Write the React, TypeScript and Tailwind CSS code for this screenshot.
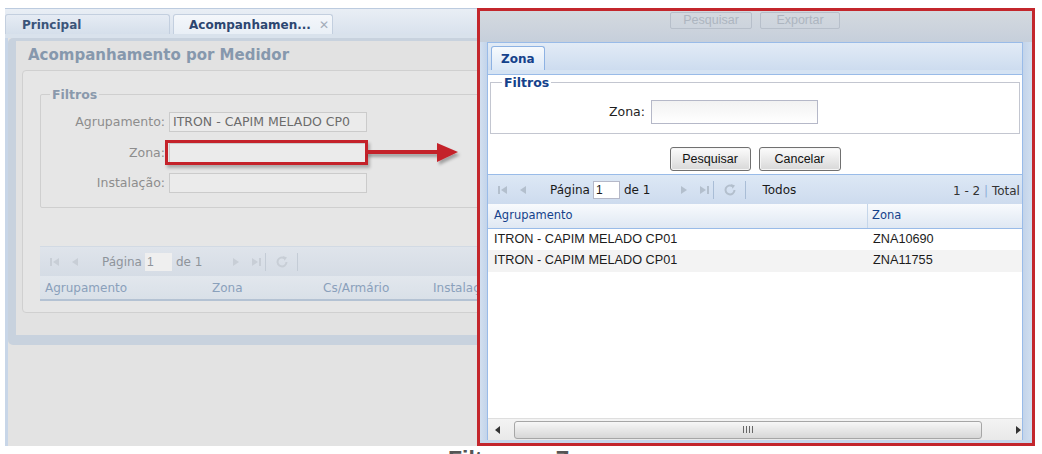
import React from "react";

const DJ = "font-['DejaVu_Sans',sans-serif]";
const LS = "font-['Liberation_Sans',Arial,sans-serif]";

function First({ c }: { c: string }) {
  return (
    <svg width="12" height="12" viewBox="0 0 12 12">
      <rect x="1" y="2" width="2" height="8" fill={c} />
      <path d="M10 2 L4 6 L10 10 Z" fill={c} />
    </svg>
  );
}
function Prev({ c }: { c: string }) {
  return (
    <svg width="12" height="12" viewBox="0 0 12 12">
      <path d="M9 2 L3 6 L9 10 Z" fill={c} />
    </svg>
  );
}
function Next({ c }: { c: string }) {
  return (
    <svg width="12" height="12" viewBox="0 0 12 12">
      <path d="M3 2 L9 6 L3 10 Z" fill={c} />
    </svg>
  );
}
function Last({ c }: { c: string }) {
  return (
    <svg width="12" height="12" viewBox="0 0 12 12">
      <path d="M2 2 L8 6 L2 10 Z" fill={c} />
      <rect x="9" y="2" width="2" height="8" fill={c} />
    </svg>
  );
}
function Refresh({ c }: { c: string }) {
  return (
    <svg width="14" height="14" viewBox="0 0 14 14">
      <path d="M11.5 7 A4.5 4.5 0 1 1 9.5 3.2" fill="none" stroke={c} strokeWidth="2" />
      <path d="M8 1 L12 2.5 L9.5 5.8 Z" fill={c} />
    </svg>
  );
}

function Paging({ dim }: { dim: boolean }) {
  const ic = dim ? "#c8ced6" : "#b3bfcd";
  const tx = dim ? "text-[#8e949b]" : "text-[#1a1a1a]";
  const sep = dim ? "bg-[#c4ccd6]" : "bg-[#a9bdd6]";
  return (
    <div className={`flex items-center h-full ${DJ} text-[12px] ${tx}`}>
      <div className="ml-[9px] flex"><First c={ic} /></div>
      <div className="ml-[8px] flex"><Prev c={ic} /></div>
      <span className="ml-[21px]">Página</span>
      <div className={`ml-[3px] w-[27px] h-[18px] flex items-center pl-[2px] ${dim ? "bg-[#efefef]" : "bg-white border border-[#b5b8c8]"}`}>
        <span className={LS}>1</span>
      </div>
      <span className="ml-[4px]">de 1</span>
      <div className="ml-[28px] flex"><Next c={ic} /></div>
      <div className="ml-[8px] flex"><Last c={ic} /></div>
      <div className={`ml-[3px] w-px h-[18px] ${sep}`} />
      <div className="ml-[9px] flex"><Refresh c={ic} /></div>
      <div className={`ml-[8px] w-px h-[18px] ${sep}`} />
      {!dim && <span className="ml-[16px]">Todos</span>}
    </div>
  );
}

export default function App() {
  return (
    <div className="w-[1042px] h-[454px] bg-white overflow-hidden">
      <div className="flex pt-[8px] pl-[5px] h-[446px]">
        {/* LEFT (masked app) */}
        <div className="w-[472px] h-[438px] flex flex-col overflow-hidden bg-[#e3e3e3]">
          {/* tab strip */}
          <div className="h-[26px] border-t border-[#bccbdf] bg-gradient-to-b from-[#e9eef5] to-[#d9e2ed] flex items-end shrink-0">
            <div className={`w-[165px] h-[20px] rounded-t-[3px] border border-b-0 border-[#c3cfdf] bg-gradient-to-b from-[#e6ecf4] to-[#d5dfeb] flex items-center pl-[16px] ${DJ} font-bold text-[12px] text-[#3a5479]`}>
              Principal
            </div>
            <div className={`ml-[3px] w-[160px] h-[20px] rounded-t-[3px] border border-b-0 border-[#c3cfdf] bg-gradient-to-b from-[#f4f7fb] to-[#e9eff6] flex items-center pl-[15px] ${DJ} font-bold text-[12px] text-[#2c4670]`}>
              <span>Acompanhamen...</span>
              <span className="ml-[8px] text-[#a3adb9] font-normal text-[12px]">✕</span>
            </div>
          </div>
          {/* body */}
          <div className="flex-1 flex border-t-[4px] border-[#d9e2ec]">
            <div className="w-[3px] bg-[#c8d6e8] shrink-0" />
            <div className="flex-1 flex flex-col">
              {/* window */}
              <div className="relative w-[490px] h-[307px] border-l-[8px] border-t-[3px] border-b-[10px] border-[#c8d2de] rounded-[5px] bg-[#e2e2e2] flex flex-col">
                <div className={`h-[29px] flex items-center pl-[12px] ${DJ} font-bold text-[15px] text-[#8698ad]`}>
                  Acompanhamento por Medidor
                </div>
                <div className="ml-[6px] h-[243px] border border-[#d0d0d0] rounded-[4px] bg-[#e6e6e6] flex flex-col pl-[17px]">
                  <fieldset className="mt-[16px] h-[121px] border border-[#cfcfcf] rounded-[2px] px-0 pb-0 mr-[-20px]">
                    <legend className={`ml-[9px] px-[2px] ${DJ} font-bold text-[12.5px] text-[#8a99ac] leading-[15px]`}>Filtros</legend>
                    <div className={`flex flex-col ${DJ} text-[12.5px] text-[#8d8d8d]`}>
                      <div className="flex items-center mt-[10px]">
                        <span className="w-[124px] text-right">Agrupamento:</span>
                        <div className="ml-[4px] w-[198px] h-[20px] border border-[#cbcbcb] bg-[#ebebeb] flex items-center pl-[3px] text-[#6c6c6c] whitespace-nowrap overflow-hidden">
                          ITRON - CAPIM MELADO CP0
                        </div>
                      </div>
                      <div className="flex items-center mt-[11px]">
                        <span className="w-[124px] text-right">Zona:</span>
                        <div className="relative ml-[4px] w-[198px] h-[20px] border border-[#cbcbcb] bg-[#ebebeb]">
                          <div className="absolute left-[-5px] top-[-4px] w-[203px] h-[25px] border-[3px] border-[#c4222a] shadow-[2px_3px_3px_rgba(0,0,0,0.25)]" />
                          <svg className="absolute left-[196px] top-[-10px]" width="100" height="36" viewBox="0 0 100 36">
                            <defs>
                              <filter id="sh" x="-10%" y="-30%" width="130%" height="190%">
                                <feDropShadow dx="2" dy="3" stdDeviation="1.6" floodColor="#000" floodOpacity="0.3" />
                              </filter>
                            </defs>
                            <g filter="url(#sh)">
                              <rect x="0" y="16" width="74" height="4" fill="#c4222a" />
                              <path d="M71 9 L92 18 L71 28 Z" fill="#c4222a" />
                            </g>
                          </svg>
                        </div>
                      </div>
                      <div className="flex items-center mt-[10px]">
                        <span className="w-[124px] text-right">Instalação:</span>
                        <div className="ml-[4px] w-[198px] h-[20px] border border-[#cbcbcb] bg-[#ebebeb]" />
                      </div>
                    </div>
                  </fieldset>
                  <div className="mt-[38px] h-[30px] bg-gradient-to-b from-[#dfe4eb] to-[#d5dce5] border-t border-[#d2dae4]">
                    <Paging dim={true} />
                  </div>
                  <div className={`h-[25px] flex items-center bg-gradient-to-b from-[#e2e7ed] to-[#d9e0e8] border-b-2 border-[#b4c2d3] ${DJ} text-[12px] text-[#8aa0bb] whitespace-nowrap`}>
                    <span className="ml-[5px] w-[167px]">Agrupamento</span>
                    <span className="w-[111px]">Zona</span>
                    <span className="w-[110px]">Cs/Armário</span>
                    <span>Instalação</span>
                  </div>
                </div>
              </div>
            </div>
          </div>
        </div>

        {/* RIGHT (popup highlighted) */}
        <div className="w-[558px] h-[438px] border-[3px] border-[#c3262c] flex flex-col">
          {/* masked toolbar */}
          <div className={`h-[31px] shrink-0 bg-gradient-to-b from-[#d4d9df] to-[#c6cfdb] flex items-start ${LS} text-[12.5px] text-[#adb5c0]`}>
            <div className="ml-[190px] mt-[1px] w-[82px] h-[17px] border border-[#b7bfca] rounded-[2px] flex items-center justify-center">Pesquisar</div>
            <div className="ml-[8px] mt-[1px] w-[80px] h-[17px] border border-[#b7bfca] rounded-[2px] flex items-center justify-center">Exportar</div>
          </div>
          {/* window */}
          <div className="flex-1 flex flex-col bg-[#c9d8ea]">
            <div className="flex-1 flex">
              <div className="w-[8px] shrink-0 bg-gradient-to-r from-[#d2dfef] to-[#c3d4ea] border-r border-[#99bbe8]" />
              <div className="w-[534px] flex flex-col bg-white">
                {/* tab strip */}
                <div className="h-[28px] shrink-0 border-t border-[#99bbe8] bg-gradient-to-b from-[#e2ebf6] to-[#cddcef] flex items-end pl-[3px]">
                  <div className={`w-[54px] h-[24px] rounded-t-[3px] border border-b-0 border-[#8db2e3] bg-gradient-to-b from-[#f7fafd] to-[#dbe8f7] flex items-center pl-[9px] ${DJ} font-bold text-[12px] text-[#15428b]`}>
                    Zona
                  </div>
                </div>
                <div className="h-[5px] shrink-0 bg-[#d5e3f3] border-b border-[#99bbe8]" />
                {/* form */}
                <div className="h-[65px] shrink-0 bg-white px-[2px]">
                  <fieldset className="h-[59px] border border-[#c3c6d0] px-0 pb-0">
                    <legend className={`ml-[11px] px-[2px] ${DJ} font-bold text-[12.5px] leading-[15px] text-[#15428b]`}>Filtros</legend>
                    <div className="flex items-center mt-[10px]">
                      <span className={`w-[154px] text-right ${DJ} text-[12.5px] text-[#1e1e1e]`}>Zona:</span>
                      <div className="ml-[6px] w-[167px] h-[24px] border border-[#b5b8c8] bg-gradient-to-b from-[#f2f2f2] to-white" />
                    </div>
                  </fieldset>
                </div>
                {/* buttons */}
                <div className={`h-[34px] shrink-0 flex justify-center pt-[7px] gap-[8px] ${LS} text-[12.5px] text-[#111]`}>
                  <div className="w-[81px] h-[24px] border border-[#707070] rounded-[3px] bg-gradient-to-b from-[#fcfcfc] to-[#d8d8d8] flex items-center justify-center shadow-[inset_0_0_0_1px_#f5f5f5]">Pesquisar</div>
                  <div className="w-[82px] h-[24px] border border-[#707070] rounded-[3px] bg-gradient-to-b from-[#fcfcfc] to-[#d8d8d8] flex items-center justify-center shadow-[inset_0_0_0_1px_#f5f5f5]">Cancelar</div>
                </div>
                {/* paging */}
                <div className="relative h-[30px] shrink-0 border-t border-[#99bbe8] bg-gradient-to-b from-[#dde8f5] to-[#cddbee] overflow-hidden">
                  <Paging dim={false} />
                  <span className={`absolute left-[465px] top-[7px] ${DJ} text-[12px] text-[#333] whitespace-nowrap`}>
                    1 - 2 <span className="text-[#8fb0d8]">|</span> Total
                  </span>
                </div>
                {/* grid header */}
                <div className={`h-[25px] shrink-0 flex bg-gradient-to-b from-[#f8fafd] to-[#dfe8f3] border-b border-[#99bbe8] ${DJ} text-[11.5px] text-[#15428b]`}>
                  <div className="w-[380px] border-r border-[#c5d6ea] flex items-center pl-[6px]">Agrupamento</div>
                  <div className="flex-1 flex items-center pl-[4px]">Zona</div>
                </div>
                {/* rows */}
                <div className={`h-[21px] shrink-0 flex items-center ${LS} text-[12.7px] text-[#1c1c1c]`}>
                  <div className="w-[380px] pl-[6px]">ITRON - CAPIM MELADO CP01</div>
                  <div className="pl-[5px]">ZNA10690</div>
                </div>
                <div className={`h-[22px] shrink-0 flex items-center bg-[#f3f3f3] ${LS} text-[12.7px] text-[#1c1c1c]`}>
                  <div className="w-[380px] pl-[6px]">ITRON - CAPIM MELADO CP01</div>
                  <div className="pl-[5px]">ZNA11755</div>
                </div>
                <div className="flex-1 bg-white" />
                {/* scrollbar */}
                <div className="h-[22px] shrink-0 flex items-center bg-gradient-to-b from-[#f3f3f3] to-[#e9e9e9] border-t border-[#dedede]">
                  <svg className="ml-[7px]" width="6" height="8" viewBox="0 0 6 8"><path d="M5 0 L0 4 L5 8 Z" fill="#333" /></svg>
                  <div className="ml-[13px] w-[469px] h-[18px] rounded-[3px] border border-[#a6a6a6] bg-gradient-to-b from-[#f7f7f7] to-[#d7d7d7] flex items-center justify-center gap-[2px]">
                    <div className="w-px h-[7px] bg-[#666]" />
                    <div className="w-px h-[7px] bg-[#666]" />
                    <div className="w-px h-[7px] bg-[#666]" />
                    <div className="w-px h-[7px] bg-[#666]" />
                  </div>
                  <svg className="ml-[34px]" width="6" height="8" viewBox="0 0 6 8"><path d="M0 0 L5 4 L0 8 Z" fill="#333" /></svg>
                </div>
              </div>
              <div className="flex-1 bg-gradient-to-r from-[#c3d4ea] to-[#d1dff0] border-l border-[#99bbe8]" />
            </div>
            <div className="h-[3px] shrink-0 bg-[#c6d7eb]" />
          </div>
        </div>
      </div>
      <div className={`pl-[448px] pt-[3px] ${LS} font-bold text-[23px] leading-[23px] text-[#555]`}>Filtro por Zona</div>
    </div>
  );
}
